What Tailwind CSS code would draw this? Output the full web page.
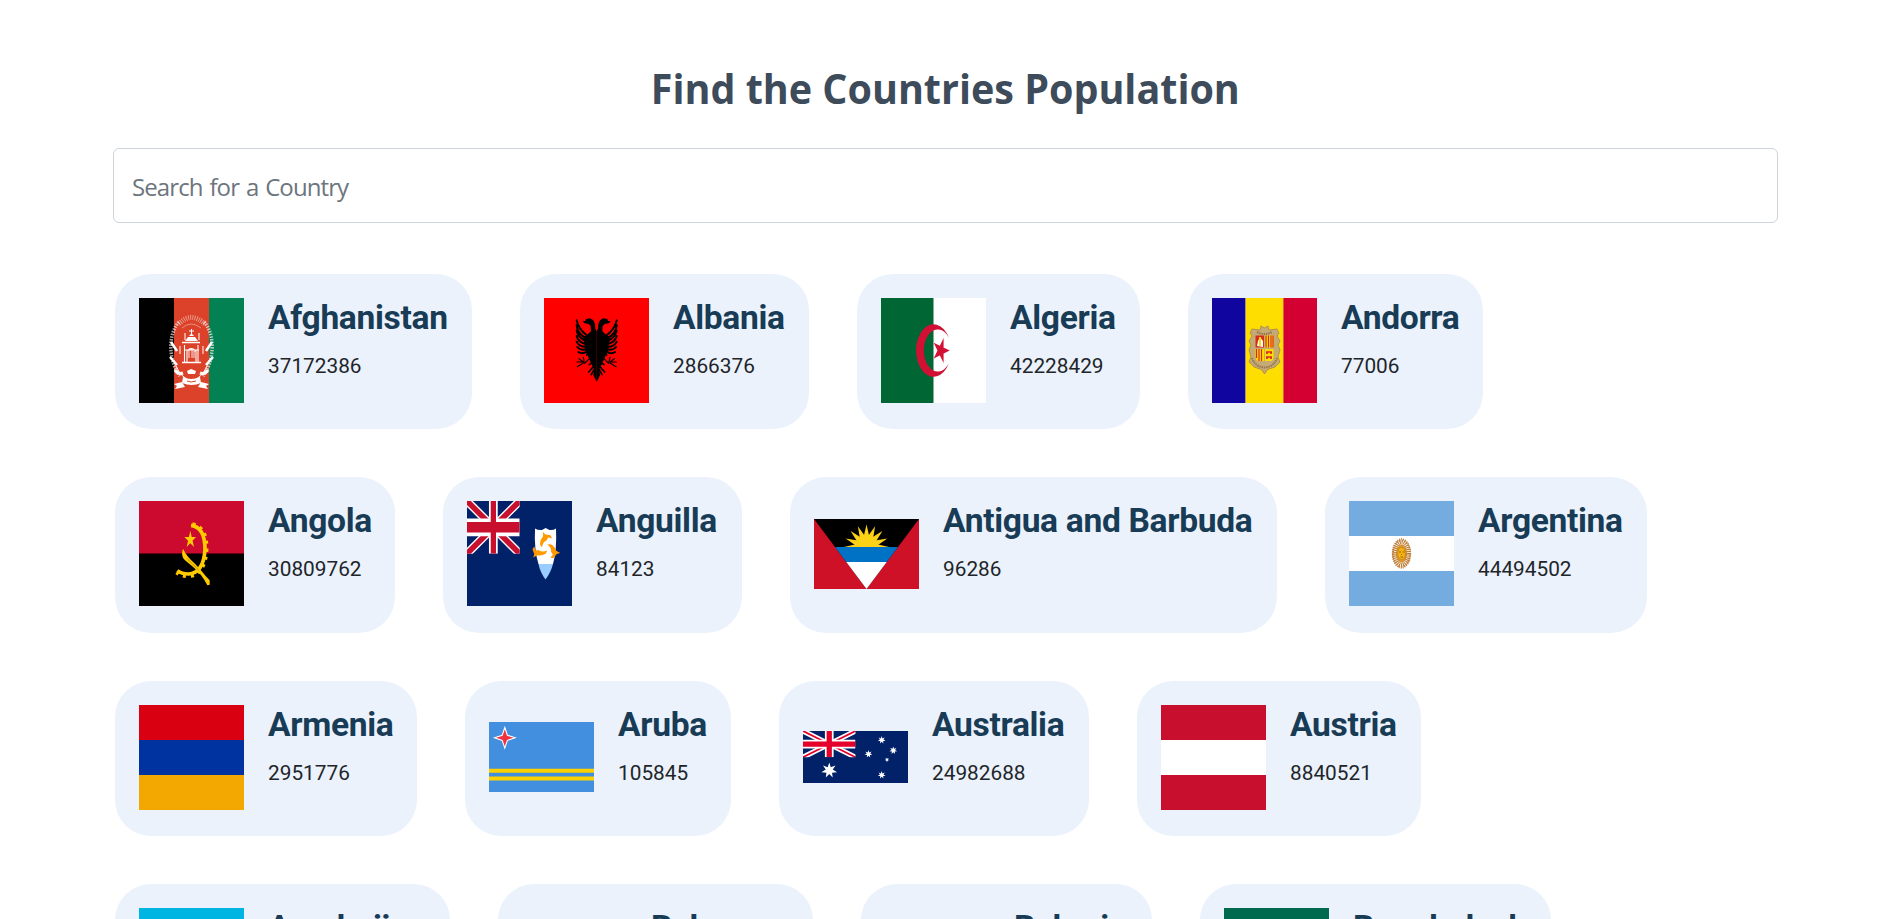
<!DOCTYPE html>
<html lang="en">
<head>
<meta charset="utf-8">
<title>Countries Population</title>
<script src="https://cdn.jsdelivr.net/npm/@tailwindcss/browser@4"></script>
</head>
<body class="bg-white">
<svg class="hidden">
  <defs>
    <symbol id="jack" viewBox="0 0 60 30" preserveAspectRatio="none">
      <clipPath id="jackRed"><path d="M30 15h30v15zv15H0zH0V0zV0h30z"/></clipPath>
      <path fill="#012169" d="M0 0h60v30H0z"/>
      <path d="M0 0l60 30M60 0L0 30" stroke="#fff" stroke-width="6"/>
      <path d="M0 0l60 30M60 0L0 30" stroke="#c8102e" stroke-width="4" clip-path="url(#jackRed)"/>
      <path d="M30 0v30M0 15h60" stroke="#fff" stroke-width="10"/>
      <path d="M30 0v30M0 15h60" stroke="#c8102e" stroke-width="6"/>
    </symbol>
    <polygon id="star7" fill="#fff" points="0,-1 .195,-.405 .782,-.623 .439,-.1 .975,.223 .352,.281 .434,.901 0,.45 -.434,.901 -.352,.281 -.975,.223 -.439,-.1 -.782,-.623 -.195,-.405"/>
  </defs>
</svg>
<main class="h-screen overflow-hidden pt-[60px] pl-[113px] pr-[103px]">
  <h1 class="h-[88px] pt-px text-center"><span class="inline-block scale-x-[.94] font-['Open_Sans'] text-[42px] leading-[54px] font-bold text-[#3d4b5a]">Find the Countries Population</span></h1>
  <input class="block h-[75px] w-full rounded-[6px] border border-[#ced4da] pt-[2px] pl-[18px] font-['Open_Sans'] text-[24px] tracking-[-0.9px] [word-spacing:1.5px] text-[#212529] outline-none placeholder:text-[#6c757d]" placeholder="Search for a Country">

  <div class="mt-[51px] ml-[2px] flex flex-col gap-12 font-[Roboto] [&_article]:flex [&_article]:h-[155.3px] [&_article]:shrink-0 [&_article]:gap-6 [&_article]:rounded-[36px] [&_article]:bg-[#ebf2fc] [&_article]:p-6 [&_h2]:pt-px [&_h2]:text-[33.6px] [&_h2]:leading-[38px] [&_h2]:font-bold [&_h2]:tracking-[-0.33px] [&_h2]:whitespace-nowrap [&_h2]:text-[#183b56] [&_p]:mt-[14px] [&_p]:text-[20.8px] [&_p]:leading-[31px] [&_p]:text-[#212529]">
    <section class="flex gap-12">
      <article class="w-[357px]">
        <svg class="size-[105px] shrink-0" viewBox="0 0 105 105">
          <path d="M0 0h35v105H0z"/><path fill="#db4229" d="M35 0h35v105H35z"/><path fill="#048153" d="M70 0h35v105H70z"/>
          <g fill="none" stroke="#fff">
            <path d="M40 24C30 34 28 60 41 78M65 24c10 10 12 36-1 54" stroke-width="3.500" stroke-dasharray="1.500 1.200" opacity=".65"/>
            <path d="M40 26Q52 13 66 26" stroke-width="5" stroke-dasharray=".9 1.300" opacity=".5"/>
            <path d="M43 30Q52 22 62 30" stroke-width=".8" opacity=".5"/>
            <path d="M32 44l6 9M73 44l-6 9M31 59l7 8M74 59l-7 8" stroke-width="2.500"/>
            <path d="M37 68Q42 80 52.500 83Q63 80 68 68" stroke-width="1"/>
            <path d="M36 72q3 5 8 3M69 72q-3 5-8 3" stroke-width="3"/>
            <path d="M43 44.500h18M43 64.500h19" stroke-width="1.500"/>
            <path d="M45.500 47v17M59 47v17M45 52h15M48 64V53q4.500-5 9 0v11" stroke-width="1.100"/>
            <path d="M50 60v-9h3v9m2 0v-7h2" stroke-width=".9"/>
            <path d="M46 42V35M60 42V35M52.500 38v-7M50 33h5M41 48v8M64 48v8" stroke-width="1"/>
          </g>
          <path fill="#fff" d="M46 43l3-4h7l3 4zM50 38q2.500-4 5 0zM44 79q8 4 17 0l1 6q-9 4-19 0zM43 84l-8 2 3 2-2 3 10-2zM62 84l8 2-3 2 2 3-10-2zM48 73l4-2 5 2-1 3h-7z"/>
          <path d="M48 83q4 2 9 0" stroke="#db4229" fill="none"/>
        </svg>
        <div><h2>Afghanistan</h2><p>37172386</p></div>
      </article>
      <article class="w-[289px]">
        <svg class="size-[105px] shrink-0" viewBox="0 0 315 315">
          <path fill="#f00" d="M0 0h315v315H0z"/>
          <g id="eagle">
            <path d="M158 252L148 232L150 214L143 200L136 184L124 158L118 120L132 108L141 100L140 84L134 78L122 76L116 70L124 69L126 63L138 61L148 67L153 78L154 92L158 100z"/>
            <g fill="none" stroke="#000" stroke-width="6" stroke-linecap="round">
              <path d="M128 112Q103 92 98 67M126 120Q100 108 98 82M126 129Q102 120 98 98M126 138Q102 133 98 114M126 147Q104 146 98 131M128 154Q108 158 100 147M130 160Q114 170 103 162"/>
              <path d="M136 158L128 171M142 160L136 176M150 190l-14 10M150 204l-16 18M150 215l-8 15" stroke-width="5"/>
              <path d="M140 178L122 196M126 192L99 192M118 195L100 206M118 192L105 182M120 188L118 178" stroke-width="3.500"/>
            </g>
          </g>
          <use href="#eagle" transform="matrix(-1 0 0 1 316 0)"/>
        </svg>
        <div><h2>Albania</h2><p>2866376</p></div>
      </article>
      <article class="w-[283px]">
        <svg class="size-[105px] shrink-0" viewBox="0 0 90 60" preserveAspectRatio="none">
          <path fill="#fff" d="M0 0h90v60H0z"/><path fill="#006633" d="M0 0h45v60H0z"/>
          <path fill="#d21034" d="M58.200 22.700A15 15 0 1 0 58.200 37.300A12 12 0 1 1 58.200 22.700z"/>
          <path fill="#d21034" d="M58.900 30L45.150 34.500L53.650 22.800V37.200L45.150 25.500z"/>
        </svg>
        <div><h2>Algeria</h2><p>42228429</p></div>
      </article>
      <article class="w-[295px]">
        <svg class="size-[105px] shrink-0" viewBox="0 0 105 105">
          <path fill="#10069f" d="M0 0h33.600v105H0z"/><path fill="#fedd00" d="M33.600 0h38v105h-38z"/><path fill="#d50032" d="M71.400 0H105v105H71.400z"/>
          <path fill="#c6aa76" stroke="#a48450" stroke-width=".8" d="M49 28l3.500 2 3.500-2 1 4 8-1 2 4-2 3 3 5-2 4 2 5-2 7 2 5-5 5-6 2-2 1-2.500 4-2.500-4-2-1-6-2-5-5 2-5-2-7 2-5-2-4 3-5-2-3 2-4 8 1z"/>
          <path d="M40 60q3 9 12.500 9.500Q62 69 65 60M45 34q8 4 15 0" fill="none" stroke="#95774a" stroke-width="2" stroke-dasharray="1.500 .8"/>
          <path fill="#d52b1e" d="M43.500 37.500h8.500v12h-8.500z"/><path d="M45 48l1-5 2-4 3 4v6z" fill="#fff"/><path fill="#fedd00" d="M47 39h2v9h-2z"/>
          <path fill="#fedd00" d="M53 37.500h8.500v12H53zM43.500 51H52v12h-6q-2.500-1-2.500-4zM53 51h8.500v8q0 3-2.500 4h-6z"/>
          <path d="M54 37.500v12M56.500 37.500v12M59 37.500v12M61 37.500v12M44.500 51v9M47 51v12M49.500 51v12" stroke="#d52b1e" stroke-width="1.200"/>
          <path d="M54 54h6m-5 2v-2m4 2v-2M54 59h6m-5 2v-2m4 2v-2" stroke="#d52b1e" stroke-width="1.700"/>
        </svg>
        <div><h2>Andorra</h2><p>77006</p></div>
      </article>
    </section>

    <section class="flex gap-12">
      <article class="w-[280px]">
        <svg class="size-[105px] shrink-0" viewBox="0 0 315 315">
          <path d="M0 0h315v315H0z"/><path fill="#cc092f" d="M0 0h315v157.500H0z"/>
          <g fill="none" stroke="#ffcb00">
            <path d="M156 73Q198 78 198 145Q194 216 148 219Q128 219 115 209" stroke-width="11"/>
            <path d="M160 70Q203 78 202 145Q197 222 148 225Q128 225 113 214" stroke-width="13" stroke-dasharray="9 14"/>
          </g>
          <path fill="#ffcb00" d="M132 143Q124 165 138 178L158 194Q190 220 205 253L212 251L212 238Q198 223 187 209L168 188Q144 168 132 143z"/>
          <path d="M144 173L180 208" stroke="#000" stroke-width="1.500" stroke-dasharray="3 2"/>
          <path fill="#ffcb00" d="M154 89L165 138L136 108H171L143 138z"/>
        </svg>
        <div><h2>Angola</h2><p>30809762</p></div>
      </article>
      <article class="w-[299px]">
        <svg class="size-[105px] shrink-0" viewBox="0 0 105 105">
          <path fill="#012169" d="M0 0h105v105H0z"/>
          <use href="#jack" width="52.700" height="52.700"/>
          <path fill="#fff" d="M68 27.500q3 2 7 1.500l3.700-2 3.700 2q4 .5 6.600-1.500Q90 49 86 63H71.500Q67 49 68 27.500z"/>
          <path fill="#99ccff" d="M71.500 63H86q-2 8-7.500 15.500Q73 71 71.500 63z"/>
          <g fill="#ff9900">
            <path id="dolphin" d="M76 31l2.500 2.500 5 .8 1.500 3-4-.8-1.500 3q-4 1.500-4.500 7l-2-3q0-5 3-8z"/>
            <use href="#dolphin" transform="rotate(120 78.500 46.500)"/><use href="#dolphin" transform="rotate(240 78.500 46.500)"/>
          </g>
        </svg>
        <div><h2>Anguilla</h2><p>84123</p></div>
      </article>
      <article class="w-[487px]">
        <svg class="mt-[17.5px] h-[70px] w-[105px] shrink-0" viewBox="0 0 105 70">
          <path fill="#ce1126" d="M0 0h105v70H0z"/><path d="M0 0h105L52.500 70z"/>
          <g fill="#fcd116" transform="translate(52.500 28)">
            <circle r="11.500"/>
            <path id="ray" d="M-2.800-10.500L0-22.500L2.800-10.500z"/>
            <use href="#ray" transform="rotate(22.500)"/><use href="#ray" transform="rotate(45)"/><use href="#ray" transform="rotate(67.500)"/><use href="#ray" transform="rotate(90)"/>
            <use href="#ray" transform="rotate(-22.500)"/><use href="#ray" transform="rotate(-45)"/><use href="#ray" transform="rotate(-67.500)"/><use href="#ray" transform="rotate(-90)"/>
          </g>
          <path fill="#0072c6" d="M21 28h63L72.750 43h-40.500z"/><path fill="#fff" d="M32.250 43h40.500L52.500 70z"/>
        </svg>
        <div><h2>Antigua and Barbuda</h2><p>96286</p></div>
      </article>
      <article class="w-[322px]">
        <svg class="size-[105px] shrink-0" viewBox="0 0 105 105">
          <path fill="#74acdf" d="M0 0h105v105H0z"/><path fill="#fff" d="M0 35h105v35H0z"/>
          <ellipse cx="52.500" cy="52.500" rx="5.500" ry="9" fill="#d9962f"/>
          <ellipse cx="52.500" cy="52.500" rx="7" ry="11.500" fill="none" stroke="#c07f35" stroke-width="5" stroke-dasharray="1.200 .8"/>
          <ellipse cx="52.500" cy="52.500" rx="8.700" ry="14.200" fill="none" stroke="#b9793a" stroke-width="2" stroke-dasharray=".9 1.100"/>
          <ellipse cx="52.500" cy="52.500" rx="3.700" ry="6" fill="#f6b40e" stroke="#c47a12" stroke-width=".6"/>
          <path d="M50 51h2m1.500 0h2m-4 5h2.500m-1.500-3v1" stroke="#85540a" stroke-width=".8"/>
        </svg>
        <div><h2>Argentina</h2><p>44494502</p></div>
      </article>
    </section>

    <section class="flex gap-12">
      <article class="w-[302px]">
        <svg class="size-[105px] shrink-0" viewBox="0 0 105 105"><path fill="#d90012" d="M0 0h105v35H0z"/><path fill="#0033a0" d="M0 35h105v35H0z"/><path fill="#f2a800" d="M0 70h105v35H0z"/></svg>
        <div><h2>Armenia</h2><p>2951776</p></div>
      </article>
      <article class="w-[266px]">
        <svg class="mt-[17.5px] h-[70px] w-[105px] shrink-0" viewBox="0 0 105 70">
          <path fill="#418fde" d="M0 0h105v70H0z"/><path fill="#ffd100" d="M0 46.700h105v4H0zM0 54.500h105v4H0z"/>
          <path fill="#ef3340" stroke="#fff" stroke-width="1.100" d="M15.800 5.500l2.600 7.700 7.700 2.600-7.700 2.600-2.600 7.700-2.600-7.700-7.700-2.600 7.700-2.600z"/>
        </svg>
        <div><h2>Aruba</h2><p>105845</p></div>
      </article>
      <article class="w-[310px]">
        <svg class="mt-[26.25px] h-[52.5px] w-[105px] shrink-0" viewBox="0 0 105 52.500">
          <path fill="#012169" d="M0 0h105v52.500H0z"/>
          <path d="M0 0l52.500 26.250M52.500 0L0 26.250" stroke="#fff" stroke-width="5.200"/>
          <path d="M0 0l52.500 26.250M52.500 0L0 26.250" stroke="#e4002b" stroke-width="1.800"/>
          <path d="M26.250 0v26.250M0 13.120h52.500" stroke="#fff" stroke-width="8.700"/>
          <path d="M26.250 0v26.250M0 13.120h52.500" stroke="#e4002b" stroke-width="5.250"/>
          <path fill="#012169" d="M0 26.250h57v8H0zM52.500 0h8v30h-8z"/>
          <use href="#star7" transform="translate(26.250 39.400) scale(8)"/>
          <use href="#star7" transform="translate(78.700 9) scale(4)"/>
          <use href="#star7" transform="translate(90.300 19.400) scale(4)"/>
          <use href="#star7" transform="translate(65.500 23) scale(4)"/>
          <use href="#star7" transform="translate(84 28.700) scale(2.300)"/>
          <use href="#star7" transform="translate(78.700 44) scale(4)"/>
        </svg>
        <div><h2>Australia</h2><p>24982688</p></div>
      </article>
      <article class="w-[284px]">
        <svg class="size-[105px] shrink-0" viewBox="0 0 105 105"><path fill="#c8102e" d="M0 0h105v105H0z"/><path fill="#fff" d="M0 35h105v35H0z"/></svg>
        <div><h2>Austria</h2><p>8840521</p></div>
      </article>
    </section>

    <section class="flex gap-12">
      <article class="w-[335px]">
        <svg class="size-[105px] shrink-0" viewBox="0 0 105 105"><path fill="#00b5e2" d="M0 0h105v35H0z"/><path fill="#ef3340" d="M0 35h105v35H0z"/><path fill="#509e2f" d="M0 70h105v35H0z"/></svg>
        <h2>Azerbaijan</h2>
      </article>
      <article class="w-[315px]">
        <svg class="mt-[26.25px] h-[52.5px] w-[105px] shrink-0" viewBox="0 0 105 52.500"><path fill="#00778b" d="M0 0h105v52.500H0z"/><path fill="#ffc72c" d="M0 17.500h105V35H0z"/><path d="M0 0l45.500 26.250L0 52.500z"/></svg>
        <h2>Bahamas</h2>
      </article>
      <article class="w-[291px]">
        <svg class="mt-[21px] h-[63px] w-[105px] shrink-0" viewBox="0 0 105 63"><path fill="#ce1126" d="M0 0h105v63H0z"/><path fill="#fff" d="M0 0h34v63H0z"/></svg>
        <h2>Bahrain</h2>
      </article>
      <article class="w-[351px]">
        <svg class="size-[105px] shrink-0" viewBox="0 0 105 105"><path fill="#006a4e" d="M0 0h105v105H0z"/><ellipse cx="47" cy="52.500" rx="21" ry="35" fill="#f42a41"/></svg>
        <h2>Bangladesh</h2>
      </article>
    </section>
  </div>
</main>
</body>
</html>
